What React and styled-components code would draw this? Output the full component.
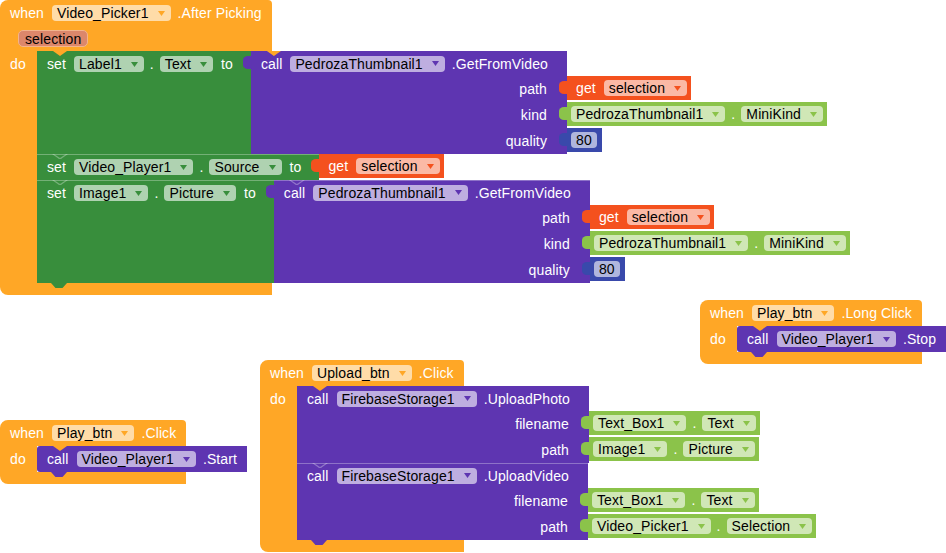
import React from 'react';
import styled, { createGlobalStyle, css } from 'styled-components';

const colors = {
  event: '#FFA726',
  setter: '#388E3C',
  method: '#5E35B1',
  getter: '#F4511E',
  component: '#8BC34A',
  math: '#3949AB',
};

const GlobalStyle = createGlobalStyle`
  html, body { margin: 0; padding: 0; background: #fff; }
  body {
    font-family: "Liberation Sans", Arial, sans-serif;
    font-size: 14px;
    letter-spacing: 0.12px;
  }
`;

const Canvas = styled.div`
  position: relative;
  width: 946px;
  height: 553px;
  overflow: hidden;
  background: #fff;
`;

// blocks sit on a free workspace, so each top-level group is placed by coordinates
const Placed = styled.div`
  position: absolute;
  left: ${p => p.$x}px;
  top: ${p => p.$y}px;
`;

const Row = styled.div`
  display: flex;
  align-items: center;
  gap: 8px;
  height: ${p => p.$h || 26}px;
  white-space: nowrap;
  color: #fff;
`;

const Dot = styled.span`
  margin: 0 -2px;
`;

const Method = styled.span`
  margin-left: -1px;
`;

const ChipBox = styled.span`
  display: inline-flex;
  align-items: center;
  gap: 9px;
  height: 16px;
  padding: 0 6px 0 5px;
  border-radius: 4px;
  background: rgba(255, 255, 255, 0.6);
  color: #000;
  line-height: 16px;
`;

const NumChip = styled(ChipBox)`
  padding: 0 5px;
`;

const Drop = ({ color, children }) => (
  <ChipBox>
    {children}
    <svg width="7" height="5" viewBox="0 0 7 5">
      <polygon points="0,0 7,0 3.5,5" fill={color} />
    </svg>
  </ChipBox>
);

const outputTab = color => css`
  &::before {
    content: '';
    position: absolute;
    left: -8px;
    top: 5px;
    width: 8px;
    height: 13px;
    background: ${color};
    border-radius: 5px 0 0 5px / 4px 0 0 4px;
  }
`;

// light joint line + notch where one statement hangs under another
const seam = css`
  &::before {
    content: '';
    position: absolute;
    z-index: 2;
    top: 0;
    left: 0;
    right: 0;
    height: 1px;
    background: rgba(255, 255, 255, 0.3);
  }
  &::after {
    content: '';
    position: absolute;
    z-index: 2;
    top: 0;
    left: 15px;
    width: 16px;
    height: 5px;
    background: rgba(255, 255, 255, 0.3);
    clip-path: polygon(0 0, 2px 0, 8px 4px, 14px 0, 16px 0, 9px 5px, 7px 5px);
  }
`;

// notch of the first statement, showing the event colour behind it
const topNotch = css`
  &::after {
    content: '';
    position: absolute;
    top: 0;
    left: 16px;
    width: 14px;
    height: 5px;
    background: ${colors.event};
    clip-path: polygon(0 0, 100% 0, 50% 100%);
  }
`;

/* ---------- event (when ... do) ---------- */

const EventFrame = styled.div`
  display: inline-grid;
  grid-template-columns: max-content;
`;

const EventHead = styled.div`
  background: ${colors.event};
  border-radius: 8px 4px 0 0;
  padding: 0 10px;
`;

const ParamRow = styled(Row)`
  padding-left: 8px;
`;

const ParamChip = styled.span`
  display: inline-flex;
  align-items: center;
  height: 15px;
  padding: 0 6px;
  border: 1px solid #f3b48c;
  border-radius: 5px;
  background: #dc876b;
  color: #000;
`;

const DoRow = styled.div`
  display: flex;
`;

const DoLabel = styled.div`
  flex: none;
  width: 37px;
  box-sizing: border-box;
  padding-left: 10px;
  line-height: 26px;
  background: ${colors.event};
  color: #fff;
`;

const Stack = styled.div`
  flex: none;
  width: 0;
  display: flex;
  flex-direction: column;
  align-items: flex-start;
`;

const EventFoot = styled.div`
  height: 12px;
  background: ${colors.event};
  border-radius: 0 0 0 8px;
`;

const Event = ({ comp, name, params, children }) => (
  <EventFrame>
    <EventHead>
      <Row>
        when<Drop color={colors.event}>{comp}</Drop>
        <Method>.{name}</Method>
      </Row>
      {params && (
        <ParamRow $h={25}>
          {params.map(p => <ParamChip key={p}>{p}</ParamChip>)}
        </ParamRow>
      )}
    </EventHead>
    <DoRow>
      <DoLabel>do</DoLabel>
      <Stack>{children}</Stack>
    </DoRow>
    <EventFoot />
  </EventFrame>
);

/* ---------- call with arguments ---------- */

const CallGrid = styled.div`
  position: relative;
  align-self: flex-start;
  display: grid;
  grid-template-columns: max-content max-content;
  grid-template-rows: 25px;
  grid-auto-rows: 26px;
  ${p => p.$output && outputTab(colors.method)}
`;

const CallHead = styled(Row)`
  position: relative;
  height: auto;
  background: ${colors.method};
  padding: 0 19px 0 10px;
`;

const ArgLabel = styled.div`
  background: ${colors.method};
  color: #fff;
  text-align: right;
  padding-right: 20px;
  line-height: 26px;
`;

const Socket = styled.div`
  display: flex;
  align-items: center;
`;

const Call = ({ comp, name, args, output }) => (
  <CallGrid $output={output}>
    <CallHead>
      call<Drop color={colors.method}>{comp}</Drop>
      <Method>.{name}</Method>
    </CallHead>
    <span />
    {args.map(([label, value]) => (
      <React.Fragment key={label}>
        <ArgLabel>{label}</ArgLabel>
        <Socket>{value}</Socket>
      </React.Fragment>
    ))}
  </CallGrid>
);

/* ---------- statements ---------- */

const SetBody = styled.div`
  position: relative;
  background: ${colors.setter};
  padding: 0 18px 0 10px;
`;

const SimpleCall = styled(Row)`
  position: relative;
  background: ${colors.method};
  padding: 0 10px;
  border-radius: 3px 0 0 3px;
`;

const Stmt = styled.div`
  position: relative;
  display: flex;
  width: max-content;
  &::after {
    content: '';
    position: absolute;
    left: 14px;
    bottom: -5px;
    width: 16px;
    height: 5px;
    background: ${p => p.$color};
    clip-path: polygon(0 0, 100% 0, 72% 100%, 28% 100%);
  }
  &:first-child > ${SetBody}, &:first-child > ${CallGrid} > ${CallHead}, &:first-child > ${SimpleCall} {
    ${topNotch}
  }
  & + & > ${SetBody}, & + & > ${CallGrid} > ${CallHead}, & + & > ${SimpleCall} {
    ${seam}
  }
`;

/* ---------- value blocks ---------- */

const Value = styled.div`
  position: relative;
  align-self: flex-start;
  display: inline-flex;
  align-items: center;
  gap: 8px;
  height: 24px;
  padding: 0 ${p => p.$pr}px 0 ${p => p.$pl}px;
  background: ${p => p.$color};
  color: #fff;
  white-space: nowrap;
  ${p => outputTab(p.$color)}
`;

const Get = ({ name }) => (
  <Value $color={colors.getter} $pl={9} $pr={4}>
    get<Drop color={colors.getter}>{name}</Drop>
  </Value>
);

const Prop = ({ comp, prop }) => (
  <Value $color={colors.component} $pl={4} $pr={4}>
    <Drop color={colors.component}>{comp}</Drop>
    <Dot>.</Dot>
    <Drop color={colors.component}>{prop}</Drop>
  </Value>
);

const Num = ({ n }) => (
  <Value $color={colors.math} $pl={4} $pr={5}>
    <NumChip>{n}</NumChip>
  </Value>
);

const SetStmt = ({ comp, prop, children }) => (
  <Stmt $color={colors.setter}>
    <SetBody>
      <Row>
        set<Drop color={colors.setter}>{comp}</Drop>
        <Dot>.</Dot>
        <Drop color={colors.setter}>{prop}</Drop>
        to
      </Row>
    </SetBody>
    {children}
  </Stmt>
);

const thumbArgs = [
  ['path', <Get name="selection" />],
  ['kind', <Prop comp="PedrozaThumbnail1" prop="MiniKind" />],
  ['quality', <Num n="80" />],
];

export default function App() {
  return (
    <Canvas>
      <GlobalStyle />

      <Placed $x={0} $y={0}>
        <Event comp="Video_Picker1" name="After Picking" params={['selection']}>
          <SetStmt comp="Label1" prop="Text">
            <Call output comp="PedrozaThumbnail1" name="GetFromVideo" args={thumbArgs} />
          </SetStmt>
          <SetStmt comp="Video_Player1" prop="Source">
            <Get name="selection" />
          </SetStmt>
          <SetStmt comp="Image1" prop="Picture">
            <Call output comp="PedrozaThumbnail1" name="GetFromVideo" args={thumbArgs} />
          </SetStmt>
        </Event>
      </Placed>

      <Placed $x={700} $y={300}>
        <Event comp="Play_btn" name="Long Click">
          <Stmt $color={colors.method}>
            <SimpleCall>
              call<Drop color={colors.method}>Video_Player1</Drop>
              <Method>.Stop</Method>
            </SimpleCall>
          </Stmt>
        </Event>
      </Placed>

      <Placed $x={0} $y={420}>
        <Event comp="Play_btn" name="Click">
          <Stmt $color={colors.method}>
            <SimpleCall>
              call<Drop color={colors.method}>Video_Player1</Drop>
              <Method>.Start</Method>
            </SimpleCall>
          </Stmt>
        </Event>
      </Placed>

      <Placed $x={260} $y={360}>
        <Event comp="Upload_btn" name="Click">
          <Stmt $color={colors.method}>
            <Call
              comp="FirebaseStorage1"
              name="UploadPhoto"
              args={[
                ['filename', <Prop comp="Text_Box1" prop="Text" />],
                ['path', <Prop comp="Image1" prop="Picture" />],
              ]}
            />
          </Stmt>
          <Stmt $color={colors.method}>
            <Call
              comp="FirebaseStorage1"
              name="UploadVideo"
              args={[
                ['filename', <Prop comp="Text_Box1" prop="Text" />],
                ['path', <Prop comp="Video_Picker1" prop="Selection" />],
              ]}
            />
          </Stmt>
        </Event>
      </Placed>
    </Canvas>
  );
}
